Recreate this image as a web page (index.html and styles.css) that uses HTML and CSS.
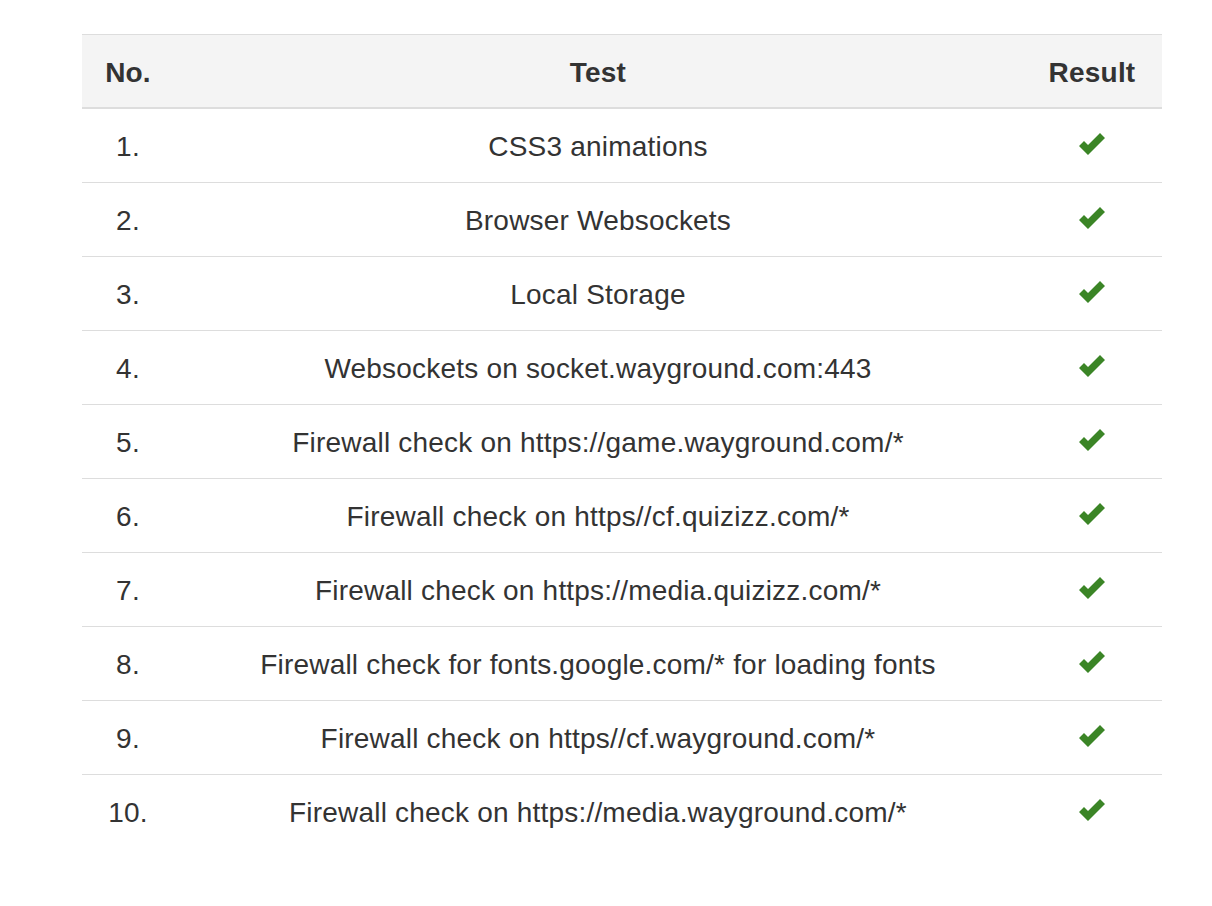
FILE: index.html
```html
<!DOCTYPE html>
<html>
<head>
<meta charset="utf-8">
<link rel="stylesheet" href="styles.css">
</head>
<body>
<div class="wrap">
<table class="tests">
  <thead>
    <tr><th class="c-no">No.</th><th class="c-test">Test</th><th class="c-res">Result</th></tr>
  </thead>
  <tbody>
    <tr><td class="c-no">1.</td><td class="c-test">CSS3 animations</td><td class="c-res"><svg class="ok" viewBox="0 0 28 22"><polygon points="0,13 5,8 9,12 21,0 26,5 9,22"/></svg></td></tr>
    <tr><td class="c-no">2.</td><td class="c-test">Browser Websockets</td><td class="c-res"><svg class="ok" viewBox="0 0 28 22"><polygon points="0,13 5,8 9,12 21,0 26,5 9,22"/></svg></td></tr>
    <tr><td class="c-no">3.</td><td class="c-test">Local Storage</td><td class="c-res"><svg class="ok" viewBox="0 0 28 22"><polygon points="0,13 5,8 9,12 21,0 26,5 9,22"/></svg></td></tr>
    <tr><td class="c-no">4.</td><td class="c-test">Websockets on socket.wayground.com:443</td><td class="c-res"><svg class="ok" viewBox="0 0 28 22"><polygon points="0,13 5,8 9,12 21,0 26,5 9,22"/></svg></td></tr>
    <tr><td class="c-no">5.</td><td class="c-test">Firewall check on https://game.wayground.com/*</td><td class="c-res"><svg class="ok" viewBox="0 0 28 22"><polygon points="0,13 5,8 9,12 21,0 26,5 9,22"/></svg></td></tr>
    <tr><td class="c-no">6.</td><td class="c-test">Firewall check on https//cf.quizizz.com/*</td><td class="c-res"><svg class="ok" viewBox="0 0 28 22"><polygon points="0,13 5,8 9,12 21,0 26,5 9,22"/></svg></td></tr>
    <tr><td class="c-no">7.</td><td class="c-test">Firewall check on https://media.quizizz.com/*</td><td class="c-res"><svg class="ok" viewBox="0 0 28 22"><polygon points="0,13 5,8 9,12 21,0 26,5 9,22"/></svg></td></tr>
    <tr><td class="c-no">8.</td><td class="c-test">Firewall check for fonts.google.com/* for loading fonts</td><td class="c-res"><svg class="ok" viewBox="0 0 28 22"><polygon points="0,13 5,8 9,12 21,0 26,5 9,22"/></svg></td></tr>
    <tr><td class="c-no">9.</td><td class="c-test">Firewall check on https//cf.wayground.com/*</td><td class="c-res"><svg class="ok" viewBox="0 0 28 22"><polygon points="0,13 5,8 9,12 21,0 26,5 9,22"/></svg></td></tr>
    <tr><td class="c-no">10.</td><td class="c-test">Firewall check on https://media.wayground.com/*</td><td class="c-res"><svg class="ok" viewBox="0 0 28 22"><polygon points="0,13 5,8 9,12 21,0 26,5 9,22"/></svg></td></tr>
  </tbody>
</table>
</div>
</body>
</html>
```
FILE: styles.css
```css
html, body {
  margin: 0;
  padding: 0;
  background: #fff;
}
body {
  font-family: "Liberation Sans", Arial, sans-serif;
  font-size: 28px;
  letter-spacing: 0.2px;
  color: #333;
}
.wrap {
  padding: 34px 50px 0 82px;
}
.tests {
  width: 1080px;
  border-collapse: separate;
  border-spacing: 0;
}
.tests th {
  background: #f4f4f4;
  font-weight: bold;
  border-top: 1px solid #ddd;
  border-bottom: 2px solid #ddd;
  height: 75px;
  padding: 4px 8px 0;
  box-sizing: border-box;
  line-height: 40px;
}
.tests td {
  border-top: 1px solid #ddd;
  height: 74px;
  padding: 2px 8px 0;
  box-sizing: border-box;
  vertical-align: middle;
  line-height: 40px;
}
.tests tbody tr:first-child td {
  border-top: 0;
  height: 73px;
}
.c-no {
  width: 92px;
  text-align: center;
}
.c-test {
  text-align: center;
}
.c-res {
  width: 140px;
  text-align: center;
}
.ok {
  display: inline-block;
  width: 28px;
  height: 22px;
  vertical-align: middle;
  margin-top: -8px;
  margin-left: 2px;
  fill: #3b8526;
}
```
